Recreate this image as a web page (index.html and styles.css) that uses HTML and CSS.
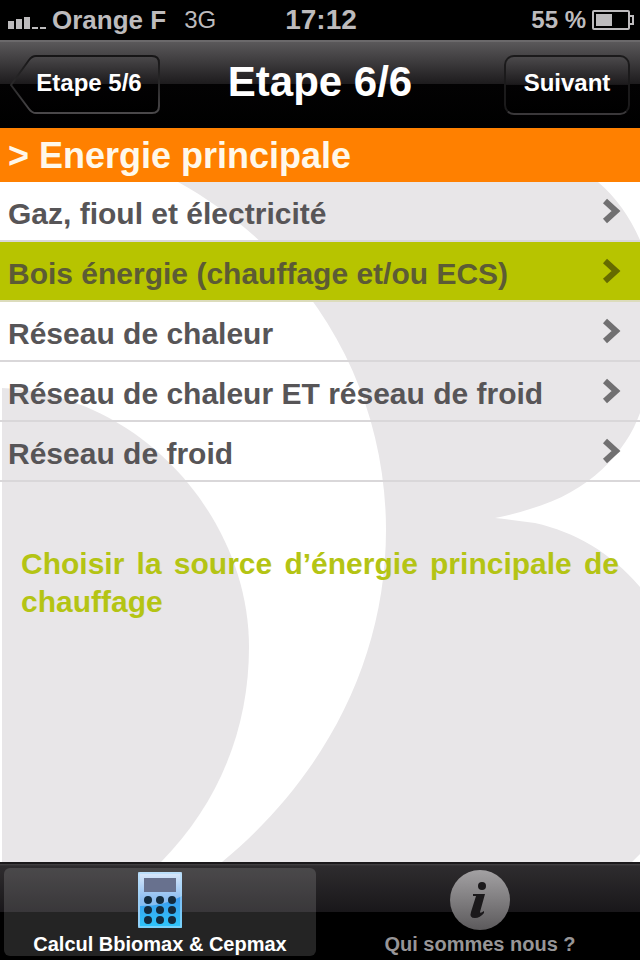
FILE: index.html
```html
<!DOCTYPE html>
<html lang="fr">

<head>
    <meta charset="UTF-8">
    <meta name="viewport" content="width=device-width, initial-scale=1.0">
    <title>Etape 6/6</title>
    <link rel="stylesheet" href="styles.css">
</head>

<body>
    <div class="status">
        <div class="network">
            <svg class="signal" width="38" height="12" viewBox="0 0 38 12">
                <path d="M0 4h6v8H0zM8 2h6v10H8zM16 0h6v12h-6zM24 10h6v2h-6zM32 10h6v2h-6z" fill="#bdbbbd" />
            </svg>
            <span class="carrier">Orange F</span>
            <span class="mode">3G</span>
        </div>
        <div class="clock">17:12</div>
        <div class="power">
            <span>55 %</span>
            <svg width="42" height="20" viewBox="0 0 42 20">
                <rect x="1" y="1" width="36" height="18" rx="1" fill="none" stroke="#bdbbbd" stroke-width="2" />
                <rect x="4" y="4" width="16" height="12" fill="#bdbbbd" />
                <path d="M38 6h3v8h-3" fill="none" stroke="#bdbbbd" stroke-width="2" />
            </svg>
        </div>
    </div>

    <header class="nav">
        <button class="navBtn back" type="button">
            <svg class="backShape" viewBox="0 0 150 60" preserveAspectRatio="none">
                <defs>
                    <linearGradient id="backFill" x1="0" y1="0" x2="0" y2="1">
                        <stop offset="0" stop-color="#4b494b" />
                        <stop offset="0.49" stop-color="#1c1a1c" />
                        <stop offset="0.5" stop-color="#030203" />
                        <stop offset="1" stop-color="#000" />
                    </linearGradient>
                    <linearGradient id="backLine" x1="0" y1="0" x2="0" y2="1">
                        <stop offset="0" stop-color="#161516" />
                        <stop offset="0.5" stop-color="#2a292a" />
                        <stop offset="1" stop-color="#4a484a" />
                    </linearGradient>
                </defs>
                <path d="M26 1H142Q149 1 149 8V51Q149 58 142 58H26Q22 58 19 54L1 30L19 5Q22 1 26 1Z" fill="url(#backFill)" stroke="url(#backLine)" stroke-width="2" />
            </svg>
            <span class="backText">Etape 5/6</span>
        </button>
        <h1 class="title">Etape 6/6</h1>
        <button class="navBtn next" type="button">Suivant</button>
    </header>

    <h2 class="section">&gt; Energie principale</h2>

    <main class="content">
        <!-- grosses lettres en fond -->
        <svg class="backdrop" viewBox="0 0 640 680" preserveAspectRatio="none">
            <path d="M178 0H598Q624 22 640 58V231C626 270 590 310 530 327Q512 333 495 336Q514 338 535 341C575 350 610 370 640 405V672L632 680H222C327 593 386 475 386 348C386 200 305 70 178 0Z" fill="#e8e6e8" />
            <path d="M2 206C140 212 249 335 249 465C249 545 220 620 161 680H2Z" fill="#e8e6e8" />
        </svg>

        <ul class="list">
            <li class="item"><a href="#">Gaz, fioul et électricité
                <svg class="arrow" viewBox="0 0 20 28"><path d="M3 4L14 14L3 24" /></svg></a></li>
            <li class="item selected"><a href="#">Bois énergie (chauffage et/ou ECS)
                <svg class="arrow" viewBox="0 0 20 28"><path d="M3 4L14 14L3 24" /></svg></a></li>
            <li class="item"><a href="#">Réseau de chaleur
                <svg class="arrow" viewBox="0 0 20 28"><path d="M3 4L14 14L3 24" /></svg></a></li>
            <li class="item"><a href="#">Réseau de chaleur ET réseau de froid
                <svg class="arrow" viewBox="0 0 20 28"><path d="M3 4L14 14L3 24" /></svg></a></li>
            <li class="item"><a href="#">Réseau de froid
                <svg class="arrow" viewBox="0 0 20 28"><path d="M3 4L14 14L3 24" /></svg></a></li>
        </ul>

        <p class="help">Choisir la source d’énergie principale de chauffage</p>
    </main>

    <nav class="tabs">
        <a class="tab active" href="#">
            <svg class="tabIcon" viewBox="0 0 60 60">
                <defs>
                    <linearGradient id="calcFill" x1="0" y1="0" x2="0" y2="1">
                        <stop offset="0" stop-color="#dce9fa" />
                        <stop offset="0.5" stop-color="#8bbcf0" />
                        <stop offset="1" stop-color="#66c8fa" />
                    </linearGradient>
                    <linearGradient id="calcLow" x1="0" y1="0" x2="0" y2="1">
                        <stop offset="0" stop-color="#3d97ec" />
                        <stop offset="1" stop-color="#2cc8fc" />
                    </linearGradient>
                </defs>
                <rect x="8" y="2" width="44" height="56" rx="2" fill="url(#calcFill)" />
                <path d="M10 36Q35 36 52 26V56Q52 58 50 58H10Z" fill="url(#calcLow)" />
                <path d="M9 3V57H51V3Z" fill="none" stroke="#a9d8fa" stroke-width="2" opacity="0.6" />
                <rect x="14" y="8" width="32" height="14" fill="#68718e" />
                <g fill="#142b3d">
                    <circle cx="18" cy="30" r="4" /><circle cx="30" cy="30" r="4" /><circle cx="42" cy="30" r="4" />
                    <circle cx="18" cy="40" r="4" /><circle cx="30" cy="40" r="4" /><circle cx="42" cy="40" r="4" />
                    <circle cx="18" cy="50" r="4" /><circle cx="30" cy="50" r="4" /><circle cx="42" cy="50" r="4" />
                </g>
            </svg>
            <span>Calcul Bbiomax &amp; Cepmax</span>
        </a>
        <a class="tab" href="#">
            <svg class="tabIcon" viewBox="0 0 60 60">
                <defs>
                    <linearGradient id="infoFill" x1="0" y1="0" x2="0" y2="1">
                        <stop offset="0" stop-color="#a3a1a3" />
                        <stop offset="1" stop-color="#5c5a5c" />
                    </linearGradient>
                </defs>
                <circle cx="30" cy="30" r="30" fill="url(#infoFill)" />
                <circle cx="32" cy="16" r="4" fill="#1b191b" />
                <path d="M23 24H35L30 42Q30 44 34 41V43Q30 48 25 48Q19 48 21 42L26 26H23Z" fill="#1b191b" />
            </svg>
            <span>Qui sommes nous ?</span>
        </a>
    </nav>
</body>

</html>
```
FILE: styles.css
```css
* {
    margin: 0;
    padding: 0;
    box-sizing: border-box;
}

body {
    min-height: 100vh;
    display: flex;
    flex-direction: column;
    background-color: #fff;
    font-family: "Liberation Sans", Arial, Helvetica, sans-serif;
    font-weight: bold;
}

a {
    color: inherit;
    text-decoration: none;
}

/* barre d'état */
.status {
    height: 40px;
    padding: 0 6px 0 8px;
    display: grid;
    grid-template-columns: 1fr auto 1fr;
    align-items: center;
    background-color: #000;
    color: #bdbbbd;
    font-size: 26px;
}

.network {
    display: flex;
    align-items: center;
    gap: 6px;
}

.signal {
    margin-top: 6px;
}

.mode {
    margin-left: 12px;
    font-size: 24px;
    font-weight: normal;
}

.clock {
    font-size: 28px;
}

.power {
    display: flex;
    align-items: center;
    justify-content: flex-end;
    gap: 6px;
    font-size: 24px;
}

/* barre de navigation */
.nav {
    height: 88px;
    padding: 0 10px;
    display: grid;
    grid-template-columns: 1fr auto 1fr;
    align-items: center;
    border-top: 2px solid #6b696b;
    background: linear-gradient(#5a585a, #1d1b1d 42px, #030203 42px, #000);
    color: #fff;
}

.title {
    font-size: 42px;
    line-height: 48px;
    padding-bottom: 6px;
}

.navBtn {
    height: 60px;
    padding-bottom: 4px;
    border: none;
    background: none;
    color: #fff;
    font-family: inherit;
    font-weight: bold;
    font-size: 24px;
}

.back {
    width: 150px;
    padding-left: 8px;
    position: relative;
}

.backShape {
    position: absolute;
    top: 0;
    left: 0;
    width: 100%;
    height: 100%;
}

.backText {
    position: relative;
}

.next {
    width: 126px;
    justify-self: end;
    border: 2px solid #1b1a1b;
    border-bottom-color: #3a383a;
    border-radius: 10px;
    background: linear-gradient(#4b494b, #1c1a1c 49%, #030203 50%, #000);
}

.section {
    padding: 2px 8px 0;
    background-color: #ff8000;
    color: #fff8ea;
    font-size: 36px;
    line-height: 52px;
}

/* contenu */
.content {
    flex: 1;
    position: relative;
}

.backdrop {
    position: absolute;
    top: 0;
    left: 0;
    width: 100%;
    height: 100%;
}

.list {
    position: relative;
    list-style: none;
}

.item {
    border-bottom: 2px solid #d9d7d9;
    color: #575557;
    font-size: 30px;
}

.item a {
    height: 58px;
    padding: 6px 18px 0 8px;
    display: flex;
    align-items: center;
    justify-content: space-between;
}

.selected {
    border-bottom-color: #dcdcbc;
    background-color: #b7c400;
    color: #5c5b35;
}

.arrow {
    width: 20px;
    height: 28px;
    margin-bottom: 6px;
    fill: none;
    stroke: #717071;
    stroke-width: 6;
}

.selected .arrow {
    stroke: #656a00;
}

.help {
    position: relative;
    padding: 63px 21px;
    color: #b4c414;
    font-size: 30px;
    line-height: 38px;
    text-align: justify;
}

/* onglets */
.tabs {
    height: 98px;
    padding: 4px;
    display: flex;
    gap: 8px;
    border-top: 2px solid #1b191b;
    background: linear-gradient(#454345, #2e2c2e 2px, #19171a 48px, #000 48px);
}

.tab {
    flex: 1;
    padding-top: 2px;
    display: flex;
    flex-direction: column;
    align-items: center;
    gap: 2px;
    border-radius: 6px;
    color: #979597;
    font-size: 20px;
    line-height: 24px;
}

.tabIcon {
    width: 60px;
    height: 60px;
    flex-shrink: 0;
}

.active {
    background-color: rgba(255, 255, 255, 0.14);
    color: #fff;
}
```
